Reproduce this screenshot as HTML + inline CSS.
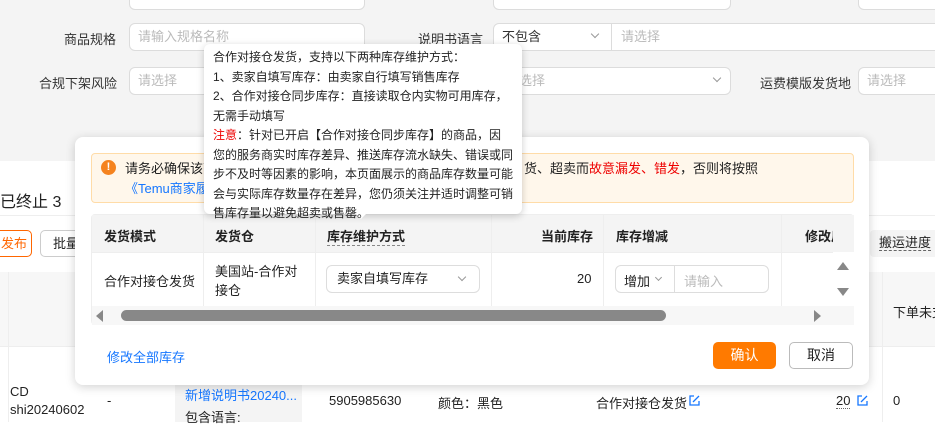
<!DOCTYPE html>
<html><head><meta charset="utf-8"><style>
*{margin:0;padding:0;box-sizing:border-box}
body{width:935px;height:422px;overflow:hidden;position:relative;background:#fff;font-family:"Liberation Sans","Noto Sans CJK SC",sans-serif;font-size:13px;color:#222}
.a{position:absolute;white-space:nowrap}
.inp{position:absolute;background:#fff;border:1px solid #dcdcdc;border-radius:6px;color:#bbb;padding-left:8px;line-height:26px;height:28px;font-size:13px;white-space:nowrap;overflow:hidden}
.chev{position:absolute;width:6px;height:6px;border-right:1px solid #999;border-bottom:1px solid #999;transform:rotate(45deg)}
.lbl{position:absolute;color:#333;font-size:13px;white-space:nowrap}
</style></head><body>
<div class="a" style="left:0;top:0;width:935px;height:161px;background:#f4f4f4"></div>
<div class="inp" style="left:129px;top:-10px;width:236px;height:20px"></div>
<div class="inp" style="left:493px;top:-10px;width:238px;height:20px"></div>
<div class="inp" style="left:858px;top:-10px;width:90px;height:20px"></div>
<div class="lbl" style="left:64px;top:29px">商品规格</div>
<div class="inp" style="left:129px;top:23px;width:236px">请输入规格名称</div>
<div class="lbl" style="left:418px;top:29px">说明书语言</div>
<div class="inp" style="left:493px;top:23px;width:119px;color:#333;border-radius:6px 0 0 6px">不包含</div>
<div class="chev" style="left:592px;top:31px"></div>
<div class="inp" style="left:611px;top:23px;width:340px;border-radius:0;padding-left:9px">请选择</div>
<div class="lbl" style="left:39px;top:73px">合规下架风险</div>
<div class="inp" style="left:129px;top:67px;width:90px">请选择</div>
<div class="inp" style="left:510px;top:67px;width:221px">选择</div>
<div class="chev" style="left:714px;top:75px"></div>
<div class="lbl" style="left:760px;top:73px">运费模版发货地</div>
<div class="inp" style="left:858px;top:67px;width:90px">请选择</div>
<div class="a" style="left:0;top:188px;font-size:16px;color:#222">已终止 3</div>
<div class="a" style="left:0;top:215px;width:935px;border-top:1px solid #eee"></div>
<div class="a" style="left:-10px;top:230px;width:42px;height:27px;border:1px solid #f60;border-radius:5px;color:#f60;line-height:25px;padding-left:10px">发布</div>
<div class="a" style="left:40px;top:230px;width:50px;height:27px;border:1px solid #ccc;border-radius:5px;line-height:25px;padding-left:12px">批量</div>
<div class="a" style="left:870px;top:230px;width:70px;height:27px;background:#f4f4f4;line-height:25px;padding-left:9px;border-radius:4px"><span style="border-bottom:1px dashed #666">搬运进度</span></div>
<div class="a" style="left:0;top:272px;width:935px;height:75px;background:#f7f7f7"></div>
<div class="a" style="left:8px;top:272px;height:150px;border-left:1px solid #eee"></div>
<div class="a" style="left:882px;top:272px;height:150px;border-left:1px solid #eee"></div>
<div class="a" style="left:893px;top:302px;font-size:13px">下单未支</div>
<div class="a" style="left:0;top:346px;width:935px;border-top:1px solid #eee"></div>
<div class="a" style="left:10px;top:383px;line-height:18px">CD<br>shi20240602</div>
<div class="a" style="left:107px;top:393px">-</div>
<div class="a" style="left:175px;top:380px;width:127px;height:42px;background:#f4f4f4"></div>
<div class="a" style="left:185px;top:385px;color:#1677ff;line-height:22px">新增说明书20240...<br><span style="color:#222">包含语言:</span></div>
<div class="a" style="left:329px;top:393px">5905985630</div>
<div class="a" style="left:438px;top:393px">颜色：黑色</div>
<div class="a" style="left:596px;top:393px">合作对接仓发货</div>
<svg class="a" style="left:689px;top:395px" width="11" height="11" viewBox="0 0 11 11"><path d="M5 1H1v9h9V6M4 7l6-6" fill="none" stroke="#1677ff" stroke-width="1.3"/></svg>
<div class="a" style="left:836px;top:393px"><span style="border-bottom:1px dotted #666">20</span></div>
<svg class="a" style="left:857px;top:395px" width="11" height="11" viewBox="0 0 11 11"><path d="M5 1H1v9h9V6M4 7l6-6" fill="none" stroke="#1677ff" stroke-width="1.3"/></svg>
<div class="a" style="left:893px;top:393px">0</div>
<div class="a" style="left:75px;top:137px;width:794px;height:248px;background:#fff;border-radius:8px;box-shadow:0 2px 10px rgba(0,0,0,.18)"></div>
<div class="a" style="left:91px;top:153px;width:763px;height:50px;background:#fff7eb;border:1px solid #ffdca8;border-radius:4px"></div>
<div class="a" style="left:101px;top:160px;width:15px;height:15px;border-radius:50%;background:#f5831f;color:#fff;font-size:11px;font-weight:bold;text-align:center;line-height:15px">!</div>
<div class="a" style="left:125px;top:159px;line-height:20px">请务必确保该商</div>
<div class="a" style="left:125px;top:179px;line-height:20px;color:#1677ff">《Temu商家履</div>
<div class="a" style="left:524px;top:159px;line-height:20px">货、超卖而<span style="color:#e00">故意漏发、错发</span>，否则将按照</div>
<div class="a" style="left:91px;top:214px;width:763px;height:111px;border:1px solid #eee;border-radius:4px"></div>
<div class="a" style="left:92px;top:215px;width:762px;height:37px;background:#f4f4f4"></div>
<div class="a" style="left:92px;top:252px;width:762px;border-top:1px solid #eee"></div>
<div class="a" style="left:203px;top:215px;height:91px;border-left:1px solid #eee"></div>
<div class="a" style="left:315px;top:215px;height:91px;border-left:1px solid #eee"></div>
<div class="a" style="left:491px;top:215px;height:91px;border-left:1px solid #eee"></div>
<div class="a" style="left:603px;top:215px;height:91px;border-left:1px solid #eee"></div>
<div class="a" style="left:781px;top:215px;height:91px;border-left:1px solid #eee"></div>
<div class="a" style="left:104px;top:226px;font-weight:bold">发货模式</div>
<div class="a" style="left:215px;top:226px;font-weight:bold">发货仓</div>
<div class="a" style="left:327px;top:226px;font-weight:bold;border-bottom:1px dashed #888">库存维护方式</div>
<div class="a" style="left:541px;top:226px;font-weight:bold">当前库存</div>
<div class="a" style="left:616px;top:226px;font-weight:bold">库存增减</div>
<div class="a" style="left:805px;top:226px;font-weight:bold;width:28px;overflow:hidden">修改后</div>
<div class="a" style="left:833px;top:252px;width:21px;height:54px;background:#fff"></div>
<div class="a" style="left:104px;top:271px">合作对接仓发货</div>
<div class="a" style="left:215px;top:262px;line-height:19px">美国站-合作对<br>接仓</div>
<div class="a" style="left:326px;top:265px;width:154px;height:28px;border:1px solid #ddd;border-radius:6px;line-height:26px;padding-left:10px">卖家自填写库存</div>
<div class="chev" style="left:459px;top:274px"></div>
<div class="a" style="left:577px;top:271px">20</div>
<div class="a" style="left:615px;top:265px;width:154px;height:28px;border:1px solid #ddd;border-radius:6px"></div>
<div class="a" style="left:674px;top:265px;height:28px;border-left:1px solid #ddd"></div>
<div class="a" style="left:624px;top:271px">增加</div>
<div class="chev" style="left:656px;top:275px;width:5px;height:5px"></div>
<div class="a" style="left:684px;top:271px;color:#bbb">请输入</div>
<div class="a" style="left:837px;top:262px;width:0;height:0;border-left:6px solid transparent;border-right:6px solid transparent;border-bottom:8px solid #888"></div>
<div class="a" style="left:837px;top:288px;width:0;height:0;border-left:6px solid transparent;border-right:6px solid transparent;border-top:8px solid #888"></div>
<div class="a" style="left:92px;top:306px;width:762px;height:19px;background:#f7f7f7"></div>
<div class="a" style="left:96px;top:310px;border-top:6px solid transparent;border-bottom:6px solid transparent;border-right:7px solid #888"></div>
<div class="a" style="left:121px;top:310px;height:11px;border-radius:6px;background:#888;width:545px"></div>
<div class="a" style="left:814px;top:310px;border-top:6px solid transparent;border-bottom:6px solid transparent;border-left:7px solid #888"></div>
<div class="a" style="left:107px;top:347px;color:#1677ff">修改全部库存</div>
<div class="a" style="left:713px;top:342px;width:63px;height:27px;background:#ff7a00;color:#fff;border-radius:5px;text-align:center;line-height:27px;font-size:14px">确认</div>
<div class="a" style="left:789px;top:342px;width:64px;height:27px;border:1px solid #bbb;color:#222;border-radius:5px;text-align:center;line-height:25px;font-size:14px">取消</div>
<div class="a" style="left:204px;top:44px;width:318px;height:170px;background:#fff;border-radius:6px;box-shadow:0 2px 8px rgba(0,0,0,.2)"></div>
<div class="a" style="left:355px;top:213px;border-left:6px solid transparent;border-right:6px solid transparent;border-top:6px solid #fff"></div>
<div class="a" style="left:213px;top:48px;font-size:12px;line-height:19.5px;color:#222">合作对接仓发货，支持以下两种库存维护方式：<br>1、卖家自填写库存：由卖家自行填写销售库存<br>2、合作对接仓同步库存：直接读取仓内实物可用库存，<br>无需手动填写<br><span style="color:#e00">注意</span>：针对已开启【合作对接仓同步库存】的商品，因<br>您的服务商实时库存差异、推送库存流水缺失、错误或同<br>步不及时等因素的影响，本页面展示的商品库存数量可能<br>会与实际库存数量存在差异，您仍须关注并适时调整可销<br>售库存量以避免超卖或售罄。</div>
</body></html>
